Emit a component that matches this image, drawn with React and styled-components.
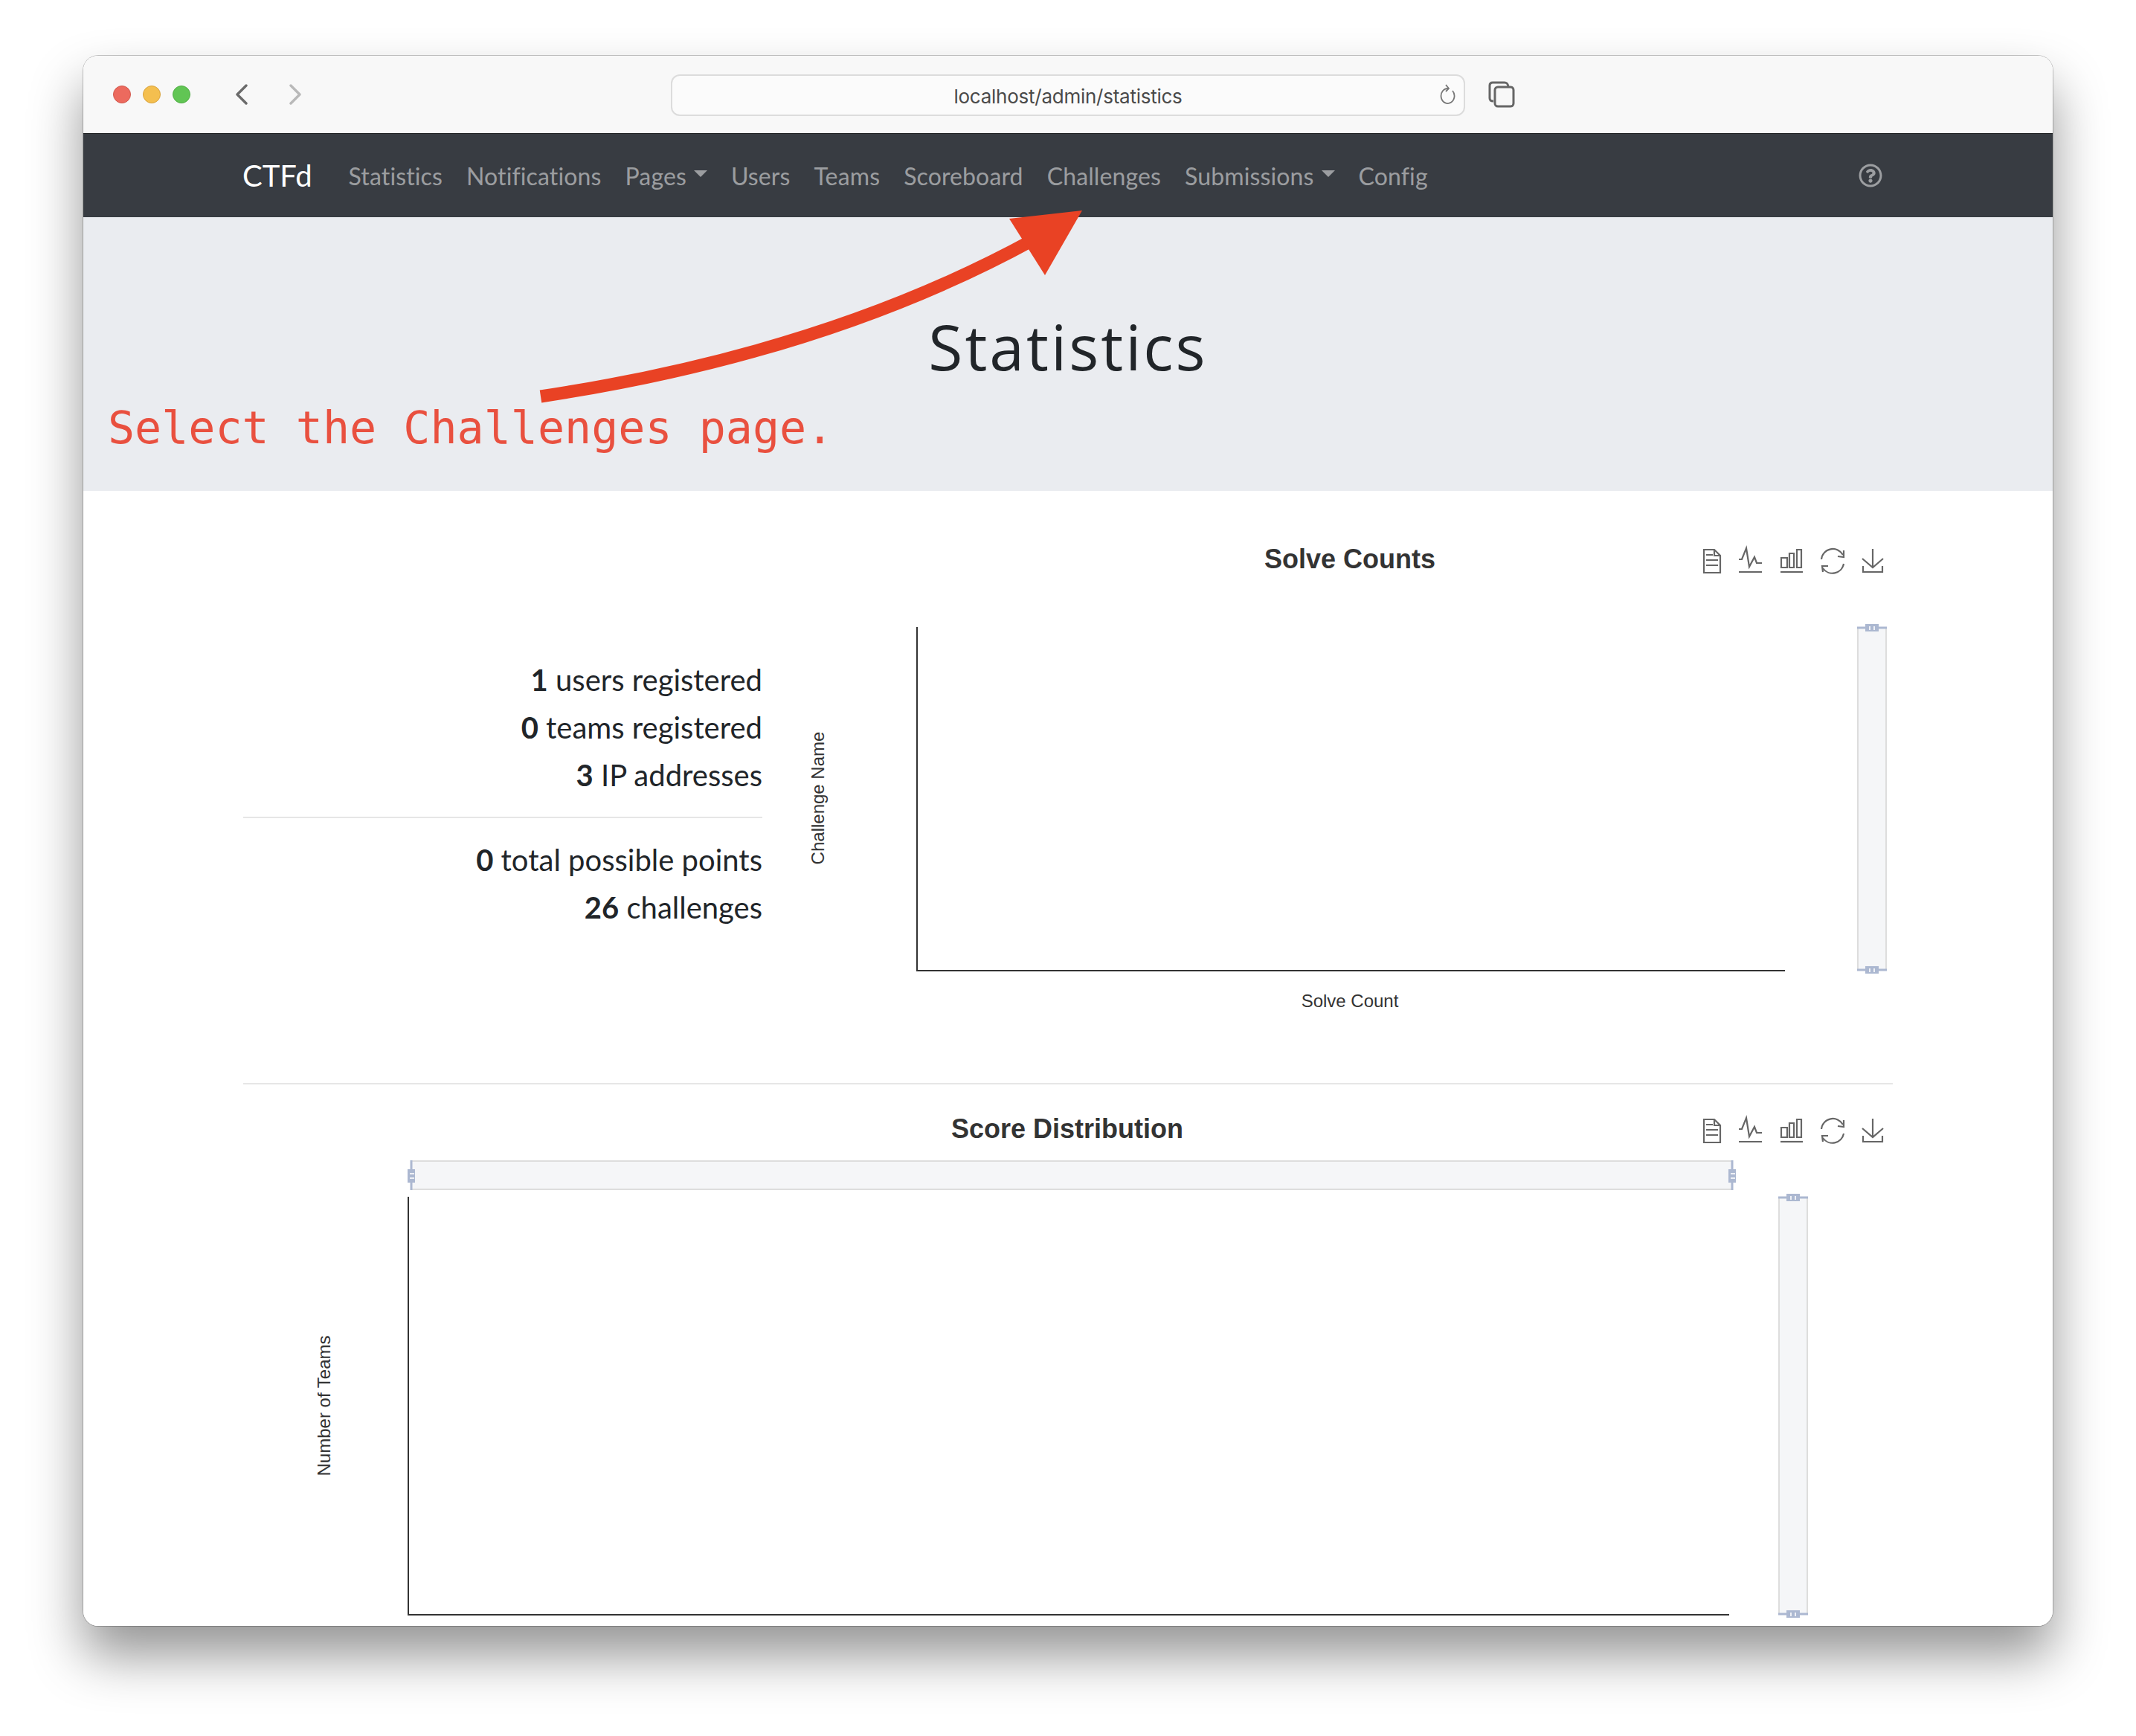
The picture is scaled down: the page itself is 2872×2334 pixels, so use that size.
import React from "react";
import styled, { createGlobalStyle } from "styled-components";
import { FaRegQuestionCircle } from "react-icons/fa";

const GlobalStyle = createGlobalStyle`
  html, body {
    margin: 0;
    background: #ffffff;
  }
`;

const Page = styled.div`
  width: 2872px;
  height: 2334px;
  box-sizing: border-box;
  padding: 75px 112px 0;
  overflow: hidden;
  background: #ffffff;
`;

const Window = styled.div`
  position: relative;
  width: 2648px;
  height: 2111px;
  border-radius: 20px;
  overflow: hidden;
  background: #ffffff;
`;

const WindowShadow = styled.div`
  border-radius: 20px;
  box-shadow: 0 0 0 1px rgba(0, 0, 0, 0.22), 0 40px 70px rgba(0, 0, 0, 0.42);
`;

const TitleBar = styled.div`
  display: flex;
  align-items: center;
  height: 105px;
  box-sizing: border-box;
  padding-left: 40px;
  background: #f8f8f8;
  border-bottom: 1px solid #1d1f21;
`;

const Light = styled.span`
  width: 24px;
  height: 24px;
  margin-right: 16px;
  border-radius: 50%;
  box-sizing: border-box;
  background: ${(props) => props.color};
  border: 1px solid ${(props) => props.edge};
`;

const NavArrow = styled.svg`
  display: block;
  width: 16px;
  height: 28px;
  margin-left: ${(props) => props.gap}px;
  fill: none;
  stroke: ${(props) => props.tone};
  stroke-width: 3.4;
  stroke-linecap: round;
  stroke-linejoin: round;
`;

const UrlBar = styled.div`
  position: relative;
  display: flex;
  align-items: center;
  justify-content: center;
  width: 1068px;
  height: 56px;
  margin: 2px 0 0 497px;
  padding-top: 2px;
  box-sizing: border-box;
  border: 2px solid #dcdcdc;
  border-radius: 12px;
  background: #fbfbfb;
  font-family: "Inter", sans-serif;
  font-size: 26px;
  letter-spacing: -0.25px;
  color: #4a4a4a;
`;

const Reload = styled.svg`
  position: absolute;
  right: 11px;
  top: 10px;
  width: 24px;
  height: 30px;
  fill: none;
  stroke: #777777;
  stroke-width: 1.8;
`;

const TabsIcon = styled.svg`
  display: block;
  width: 36px;
  height: 36px;
  margin-left: 31px;
  fill: none;
  stroke: #666666;
  stroke-width: 3;
`;

const Navbar = styled.nav`
  display: flex;
  align-items: center;
  height: 112px;
  padding: 0 112px 0 214px;
  background: #383c42;
  font-family: "Lato", sans-serif;
`;

const Brand = styled.span`
  margin-right: 33px;
  font-size: 40px;
  color: #ffffff;
`;

const NavItem = styled.span`
  display: flex;
  align-items: center;
  padding: 0 16px;
  font-size: 32px;
  letter-spacing: 0.13px;
  color: rgba(255, 255, 255, 0.5);
`;

const Caret = styled.span`
  width: 0;
  height: 0;
  margin-left: 10px;
  border-top: 9px solid rgba(255, 255, 255, 0.5);
  border-left: 9px solid transparent;
  border-right: 9px solid transparent;
  transform: translateY(-3px);
`;

const HelpLink = styled.span`
  display: flex;
  margin-left: auto;
  padding-right: 117px;
  font-size: 32px;
  color: rgba(255, 255, 255, 0.5);
`;

const Jumbotron = styled.header`
  height: 368px;
  box-sizing: border-box;
  padding-top: 118px;
  background: #eaecf0;
  text-align: center;
`;

const PageTitle = styled.h1`
  margin: 0;
  font-family: "Open Sans", sans-serif;
  font-size: 84px;
  font-weight: 400;
  line-height: 112px;
  letter-spacing: 3px;
  color: #212529;
`;

const Content = styled.main`
  padding: 40px 215px 0;
`;

const StatsRow = styled.section`
  display: grid;
  grid-template-columns: 698px 1520px;
`;

const Stats = styled.div`
  padding-top: 190px;
  text-align: right;
  font-family: "Lato", sans-serif;
  color: #212529;
`;

const Stat = styled.div`
  margin-bottom: 16px;
  font-size: 40px;
  line-height: 48px;
`;

const StatsRule = styled.hr`
  margin: 32px 0 32px;
  border: 0;
  border-top: 2px solid #e6e6e6;
`;

const ChartRule = styled.hr`
  margin: 56px 0 32px;
  border: 0;
  border-top: 2px solid #e6e6e6;
`;

const ChartSvg = styled.svg`
  display: block;
`;

const ChartTitle = styled.text`
  font-family: "Liberation Sans", sans-serif;
  font-size: 36px;
  font-weight: 700;
  fill: #333333;
  text-anchor: middle;
`;

const AxisName = styled.text`
  font-family: "Liberation Sans", sans-serif;
  font-size: 24px;
  fill: #333333;
  text-anchor: middle;
`;

const AxisLine = styled.path`
  fill: none;
  stroke: #333333;
  stroke-width: 2;
`;

const ToolIcon = styled.g`
  fill: none;
  stroke: #666666;
  stroke-width: 2.2;
`;

const SliderTrack = styled.rect`
  fill: #f5f6f8;
  stroke: #dddddd;
  stroke-width: 2;
`;

const SliderEdge = styled.path`
  stroke: #acb8d1;
  stroke-width: 3;
`;

const SliderHandle = styled.rect`
  fill: #acb8d1;
`;

const SliderGrip = styled.rect`
  fill: #eef0f5;
`;

const Annotation = styled.svg`
  position: absolute;
  left: 0;
  top: 0;
  width: 2648px;
  height: 700px;
  pointer-events: none;
`;

const AnnotationText = styled.div`
  position: absolute;
  left: 33px;
  top: 462px;
  font-family: "DejaVu Sans Mono", monospace;
  font-size: 60px;
  line-height: 76px;
  white-space: pre;
  color: #e9503f;
`;

// echarts toolbox, x and y are where the document icon starts
const Toolbox = ({ x, y }) => (
  <ToolIcon transform={`translate(${x} ${y})`}>
    <path d="M1 1H15L23 9V32H1Z" />
    <path d="M15 1V9H23M4 8H13M4 15H20M4 22H20" />
    <path d="M48 14H52L58 -1L62 24L69 11L72 19H79M48 31H79" />
    <path d="M104 31H134" />
    <path d="M105 12H113V25H105ZM116 6H122V25H116ZM126 1H132V25H126Z" />
    <path d="M159 14A15.5 15.5 0 0 1 188 8M189 20A15.5 15.5 0 0 1 161 26" />
    <path d="M181 10L189 11L189 2M168 23L160 23L161 31" />
    <path d="M228 0V26M214 13L228 25L242 13M215 23V31H241V23" />
  </ToolIcon>
);

const VerticalSlider = ({ x, top, bottom }) => (
  <g>
    <SliderTrack x={x} y={top} width={38} height={bottom - top} />
    {[top, bottom].map((y) => (
      <g key={y}>
        <SliderEdge d={`M${x - 1} ${y}H${x + 39}`} />
        <SliderHandle x={x + 10} y={y - 5} width={18} height={10} />
        <SliderGrip x={x + 15} y={y - 2} width={2} height={5} />
        <SliderGrip x={x + 21} y={y - 2} width={2} height={5} />
      </g>
    ))}
  </g>
);

const HorizontalSlider = ({ left, right, y }) => (
  <g>
    <SliderTrack x={left} y={y} width={right - left} height={38} />
    {[left, right].map((x) => (
      <g key={x}>
        <SliderEdge d={`M${x} ${y - 1}V${y + 39}`} />
        <SliderHandle x={x - 5} y={y + 11} width={10} height={18} />
        <SliderGrip x={x - 2} y={y + 16} width={6} height={2} />
        <SliderGrip x={x - 2} y={y + 22} width={6} height={2} />
      </g>
    ))}
  </g>
);

const navItems = [
  { label: "Statistics" },
  { label: "Notifications" },
  { label: "Pages", caret: true },
  { label: "Users" },
  { label: "Teams" },
  { label: "Scoreboard" },
  { label: "Challenges" },
  { label: "Submissions", caret: true },
  { label: "Config" },
];

const App = () => {
  return (
    <Page>
      <GlobalStyle />
      <WindowShadow>
        <Window>
          <TitleBar>
            <Light color="#ec6a5e" edge="#d25a4f" />
            <Light color="#f4bf4f" edge="#d9a33d" />
            <Light color="#61c554" edge="#52ad46" />
            <NavArrow viewBox="0 0 16 28" gap={45} tone="#6b6b6b">
              <path d="M14 2L2 14L14 26" />
            </NavArrow>
            <NavArrow viewBox="0 0 16 28" gap={56} tone="#b9b9b9">
              <path d="M2 2L14 14L2 26" />
            </NavArrow>
            <UrlBar>
              localhost/admin/statistics
              <Reload viewBox="0 0 24 30">
                <path d="M14 7A9 10 0 1 0 20 10" />
                <path d="M11 2L15 7L11 11" />
              </Reload>
            </UrlBar>
            <TabsIcon viewBox="0 0 36 36">
              <path d="M7 27C4 27 2 26 2 23V6C2 3 4 2 6 2H22C25 2 26 3 27 7" />
              <rect x="9" y="8" width="25" height="26" rx="4" />
            </TabsIcon>
          </TitleBar>
          <Navbar>
            <Brand>CTFd</Brand>
            {navItems.map((item) => (
              <NavItem key={item.label}>
                {item.label}
                {item.caret && <Caret />}
              </NavItem>
            ))}
            <HelpLink>
              <FaRegQuestionCircle />
            </HelpLink>
          </Navbar>
          <Jumbotron>
            <PageTitle>Statistics</PageTitle>
          </Jumbotron>
          <Content>
            <StatsRow>
              <Stats>
                <Stat><b>1</b> users registered</Stat>
                <Stat><b>0</b> teams registered</Stat>
                <Stat><b>3</b> IP addresses</Stat>
                <StatsRule />
                <Stat><b>0</b> total possible points</Stat>
                <Stat><b>26</b> challenges</Stat>
              </Stats>
              <ChartSvg width="1520" height="700" viewBox="1025 700 1520 700">
                <ChartTitle x="1815" y="764">Solve Counts</ChartTitle>
                <Toolbox x={2290} y={738} />
                <AxisName x="1100" y="1073" transform="rotate(-90 1100 1073)" dy="8">Challenge Name</AxisName>
                <AxisLine d="M1233 843V1305H2400" />
                <AxisName x="1815" y="1354">Solve Count</AxisName>
                <VerticalSlider x={2498} top={844} bottom={1304} />
              </ChartSvg>
            </StatsRow>
            <ChartRule />
            <ChartSvg width="2218" height="698" viewBox="327 1490 2218 698">
              <ChartTitle x="1435" y="1530">Score Distribution</ChartTitle>
              <Toolbox x={2290} y={1504} />
              <HorizontalSlider left={553} right={2329} y={1561} />
              <AxisName x="436" y="1890" transform="rotate(-90 436 1890)" dy="8">Number of Teams</AxisName>
              <AxisLine d="M549 1609V2171H2325" />
              <VerticalSlider x={2392} top={1610} bottom={2170} />
            </ChartSvg>
          </Content>
          <Annotation viewBox="0 0 2648 700">
            <path d="M615 458Q999 400 1278 247" fill="none" stroke="#e94224" strokeWidth="17" />
            <path d="M1343 208L1245 219L1293 295Z" fill="#e94224" />
          </Annotation>
          <AnnotationText>Select the Challenges page.</AnnotationText>
        </Window>
      </WindowShadow>
    </Page>
  );
};

export default App;
